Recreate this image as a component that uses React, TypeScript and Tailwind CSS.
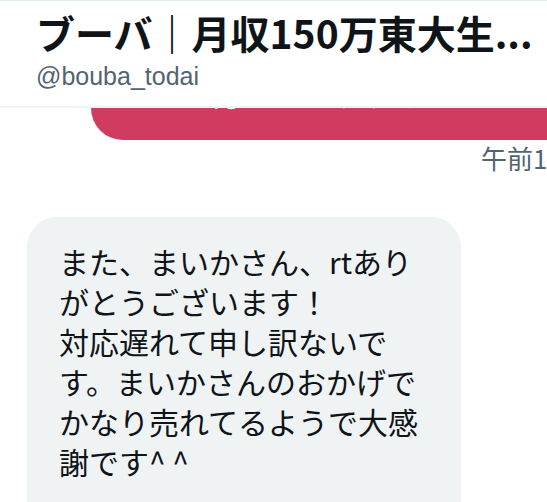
import React from "react";

export default function App() {
  const jp = { fontFamily: '"Noto Sans CJK JP", "Noto Sans", sans-serif' };
  return (
    <div className="w-[547px] h-[502px] overflow-hidden bg-white flex flex-col border-t border-[#e1e8ed]">
      <header className="relative z-10 bg-white h-[107px] shrink-0 border-b-[2px] border-[#eff3f4] pl-[36px] flex flex-col justify-center">
        <div
          className="text-[39px] leading-[46px] font-bold text-[#0f1419] whitespace-nowrap mt-[-6px]"
          style={jp}
        >
          ブーバ｜月収150万東大生...
        </div>
        <div
          className="text-[25px] leading-[32px] text-[#536471] mt-[5px]"
          style={{ fontFamily: '"Liberation Sans", Arial, sans-serif' }}
        >
          @bouba_todai
        </div>
      </header>
      <div className="flex-1 overflow-hidden">
        <div className="w-[625px] pl-[27px] pr-[27px] flex flex-col">
          <div
            className="ml-[64px] -mt-[56px] bg-[#d03b60] rounded-b-[32px] rounded-tl-[32px] px-[32px] pt-[21px] pb-[27px] text-white text-[30px] leading-[40px] whitespace-nowrap"
            style={jp}
          >
            ほかの方にもおすすめさせていただきます
          </div>
          <div
            className="text-right text-[26px] leading-[32px] text-[#536471] mt-[2px] whitespace-nowrap"
            style={jp}
          >
            午前10:42
          </div>
          <div
            className="mt-[43px] w-[434px] bg-[#eff3f4] rounded-[30px] px-[32px] pt-[24px] pb-[24px] text-[30px] leading-[40px] text-[#0f1419]"
            style={jp}
          >
            <div>また、まいかさん、rtあり</div>
            <div>がとうございます！</div>
            <div>対応遅れて申し訳ないで</div>
            <div>す。まいかさんのおかげで</div>
            <div>かなり売れてるようで大感</div>
            <div>謝です^ ^</div>
            <div className="h-[40px]"></div>
          </div>
        </div>
      </div>
    </div>
  );
}
